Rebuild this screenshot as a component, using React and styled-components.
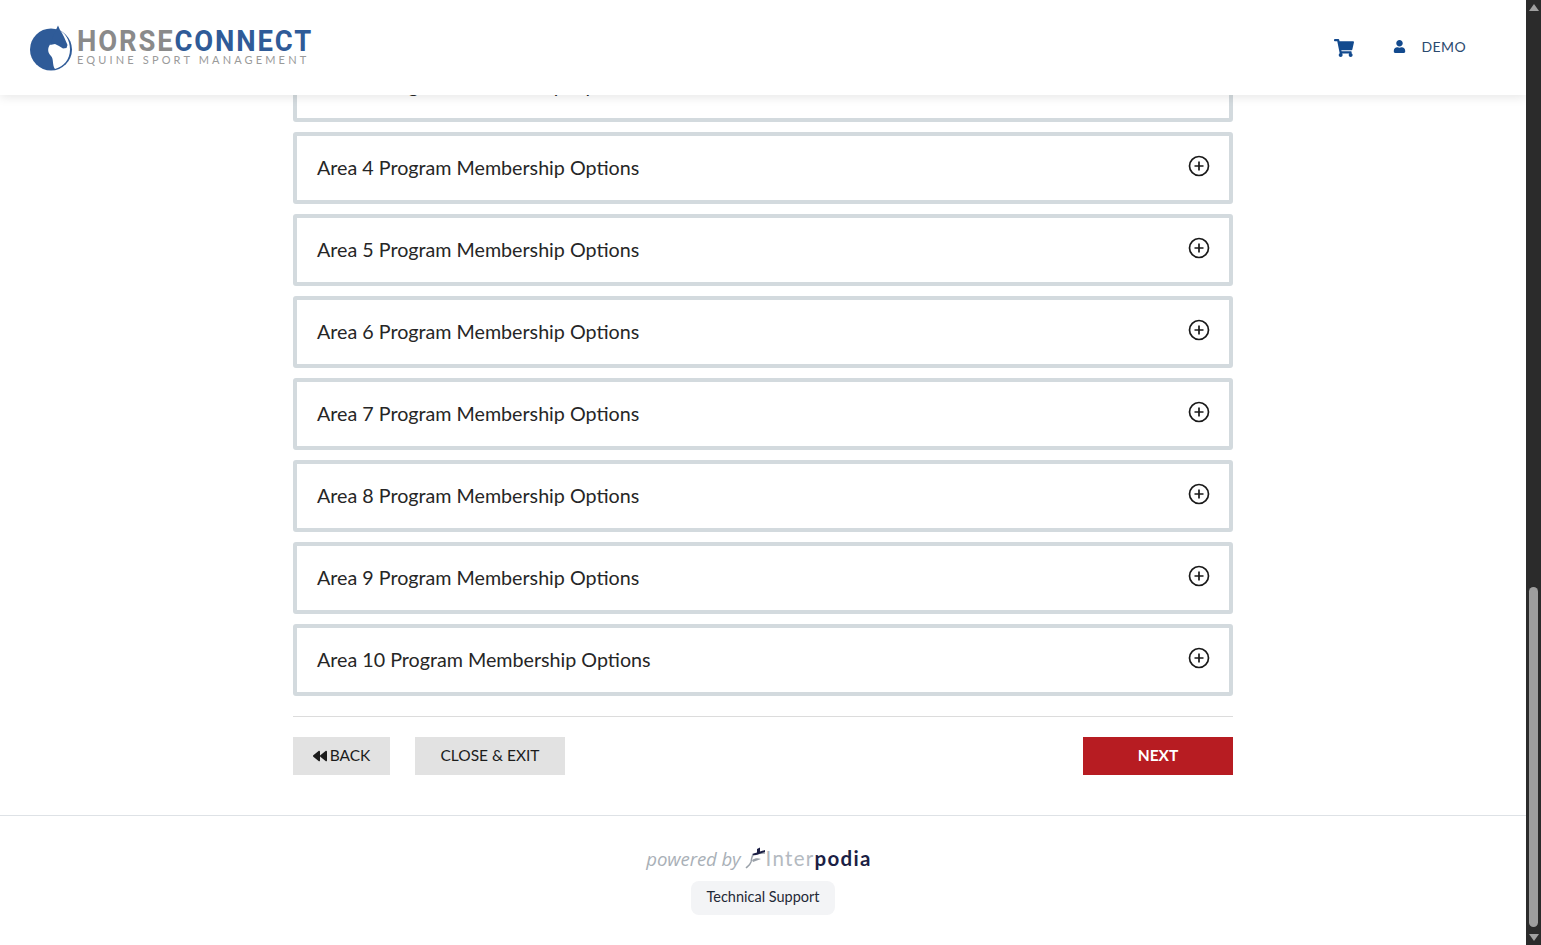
import React from "react";
import styled, { createGlobalStyle } from "styled-components";
import { FaShoppingCart, FaUser, FaBackward } from "react-icons/fa";

const GlobalStyle = createGlobalStyle`
  html, body {
    margin: 0;
    height: 100%;
    overflow: hidden;
    background: #fff;
    font-family: "Lato", "Open Sans", sans-serif;
    color: #212529;
  }
  * {
    box-sizing: border-box;
  }
`;

const Window = styled.div`
  display: flex;
  height: 945px;
  overflow: hidden;
`;

const Page = styled.div`
  position: relative;
  flex: 1;
  min-width: 0;
  overflow: hidden;
`;

const Header = styled.header`
  position: absolute;
  top: 0;
  left: 0;
  right: 0;
  z-index: 2;
  height: 95px;
  background: #fff;
  box-shadow: 0 2px 10px rgb(0 0 0 / 10%);
  display: flex;
  align-items: center;
  justify-content: space-between;
  padding: 0 60px 0 30px;
`;

const Logo = styled.div`
  display: flex;
  align-items: center;
  gap: 3px;
`;

const LogoText = styled.div`
  display: flex;
  flex-direction: column;
  margin-top: -3px;
`;

const LogoName = styled.div`
  font-family: "Roboto", sans-serif;
  font-weight: 700;
  font-size: 29.5px;
  line-height: 27px;
  letter-spacing: 2px;
  color: #8a8a8a;
  white-space: nowrap;
  transform: scaleX(0.93);
  transform-origin: left center;
  span {
    color: #2f5b98;
  }
`;

const LogoTag = styled.div`
  font-family: "Lato", sans-serif;
  font-size: 11px;
  line-height: 10px;
  letter-spacing: 3.15px;
  color: #9a9a9a;
  white-space: nowrap;
`;

const HeaderNav = styled.nav`
  display: flex;
  align-items: center;
  color: #134a8e;
`;

const CartLink = styled.a`
  display: flex;
  font-size: 20px;
  margin-right: 39.5px;
`;

const UserLink = styled.a`
  display: flex;
  align-items: center;
  gap: 15px;
  margin-top: -2px;
  font-size: 14px;
  letter-spacing: 0.4px;
  color: #2b4a6f;
  svg {
    color: #134a8e;
    font-size: 13px;
  }
`;

const Content = styled.main`
  width: 940px;
  margin: 0 auto;
  padding-top: 50px;
`;

const Accordion = styled.div`
  display: flex;
  flex-direction: column;
  gap: 10px;
`;

const Card = styled.div`
  height: 72px;
  border: 4px solid #d3dade;
  border-radius: 3px;
  background: #fff;
  display: flex;
  align-items: center;
  justify-content: space-between;
  padding: 0 19px 0 20px;
  font-size: 19.7px;
  color: #262626;
  span {
    margin-top: -2px;
  }
`;

const PlusIcon = styled.svg`
  width: 22px;
  height: 22px;
  margin-top: -4px;
  fill: none;
  stroke: #1a1a1a;
  stroke-width: 1.7;
`;

const Actions = styled.div`
  margin-top: 20px;
  border-top: 1px solid #dcdcdc;
  padding-top: 20px;
  display: flex;
  gap: 25px;
`;

const Button = styled.button`
  height: 38px;
  width: ${(props) => props.$width}px;
  border: 0;
  border-radius: 0;
  font-family: inherit;
  font-size: 15.5px;
  display: flex;
  align-items: center;
  justify-content: center;
  gap: 3px;
  background: ${(props) => (props.$primary ? "#b71c22" : "#e2e2e2")};
  color: ${(props) => (props.$primary ? "#fff" : "#1c1c1c")};
  font-weight: ${(props) => (props.$primary ? 700 : 400)};
  margin-left: ${(props) => (props.$primary ? "auto" : "0")};
  padding: 0 0 2px;
  svg {
    font-size: 14px;
    margin-top: 2px;
  }
`;

const Footer = styled.footer`
  margin-top: 40px;
  border-top: 1px solid #dee2e6;
  padding-top: 27px;
  display: flex;
  flex-direction: column;
  align-items: center;
`;

const Powered = styled.div`
  display: flex;
  align-items: center;
  height: 30px;
  margin-left: -8px;
`;

const PoweredBy = styled.span`
  font-family: "Open Sans", sans-serif;
  font-style: italic;
  font-size: 18.6px;
  color: #a9b0b7;
  letter-spacing: -0.1px;
  margin-right: 4px;
`;

const Inter = styled.span`
  font-family: "Lato", sans-serif;
  font-size: 20.5px;
  letter-spacing: 1.3px;
  color: #b4bac1;
`;

const Podia = styled.span`
  font-family: "Lato", sans-serif;
  font-size: 20.5px;
  font-weight: 700;
  letter-spacing: 1.3px;
  color: #1c1f45;
`;

const SupportLink = styled.a`
  margin-top: 8px;
  height: 34px;
  width: 144px;
  border-radius: 8px;
  background: #f3f4f6;
  font-size: 14.5px;
  color: #1f2937;
  display: flex;
  align-items: center;
  justify-content: center;
  padding-bottom: 3px;
`;

const Scrollbar = styled.div`
  width: 15px;
  flex: none;
  background: #2b2b2b;
  display: flex;
  flex-direction: column;
  align-items: center;
  justify-content: space-between;
  padding: 4px 0;
`;

const ScrollArrow = styled.div`
  width: 0;
  height: 0;
  border-left: 5px solid transparent;
  border-right: 5px solid transparent;
  border-${(props) => (props.$down ? "top" : "bottom")}: 7px solid #a0a0a0;
`;

const ScrollTrack = styled.div`
  flex: 1;
  width: 100%;
  display: flex;
  flex-direction: column;
  justify-content: flex-end;
  align-items: center;
  padding-bottom: 7px;
`;

const ScrollThumb = styled.div`
  width: 9px;
  height: 340px;
  border-radius: 5px;
  background: #9e9e9e;
`;

function HorseMark() {
  return (
    <svg width="44" height="48" viewBox="0 0 44 48" aria-hidden="true">
      <circle cx="21" cy="25.5" r="21" fill="#2f5b98" />
      <path
        d="M28 6 C35 8 40 16 40 25.5 C40 35 34 42.5 25 45 C22 41 24 35 21 32 C18 29 17 25 20 20.5 L27 14Z"
        fill="#fff"
      />
      <path
        d="M28 1.5 L30 6 C33 10 35 15 37.5 21 L36.5 24 L33 24.5 L29 22 L25 20 L20 21 L24 10Z"
        fill="#2f5b98"
      />
    </svg>
  );
}

function InterpodiaMark() {
  return (
    <svg width="21" height="22" viewBox="0 0 21 22" aria-hidden="true">
      <path d="M1 21 C3 19 5 18 6 15 C7 11 6 9 9 7.5 C12 6 16 6 20 6" fill="none" stroke="#9aa1a9" strokeWidth="1.4" />
      <path d="M7 7 L12 5.5 L12 2 L15 0.5 L15 4.5 L20 3 L20 5 L14 7 C12 8 9 9 7 7Z" fill="#1c1f45" />
      <path d="M7 13 C10 11 13 11 16 12 L8 15Z" fill="#9aa1a9" />
    </svg>
  );
}

function PlusCircle() {
  return (
    <PlusIcon viewBox="0 0 22 22">
      <circle cx="11" cy="11" r="9.5" />
      <path d="M11 6.5 V15.5 M6.5 11 H15.5" />
    </PlusIcon>
  );
}

const areas = [4, 5, 6, 7, 8, 9, 10];

export default function App() {
  return (
    <>
      <GlobalStyle />
      <Window>
        <Page>
          <Header>
            <Logo>
              <HorseMark />
              <LogoText>
                <LogoName>
                  HORSE<span>CONNECT</span>
                </LogoName>
                <LogoTag>EQUINE SPORT MANAGEMENT</LogoTag>
              </LogoText>
            </Logo>
            <HeaderNav>
              <CartLink>
                <FaShoppingCart />
              </CartLink>
              <UserLink>
                <FaUser />
                DEMO
              </UserLink>
            </HeaderNav>
          </Header>
          <Content>
            <Accordion>
              <Card>
                <span>Area 3 Program Membership Options</span>
                <PlusCircle />
              </Card>
              {areas.map((area) => (
                <Card key={area}>
                  <span>Area {area} Program Membership Options</span>
                  <PlusCircle />
                </Card>
              ))}
            </Accordion>
            <Actions>
              <Button $width={97}>
                <FaBackward />
                BACK
              </Button>
              <Button $width={150}>CLOSE &amp; EXIT</Button>
              <Button $width={150} $primary>
                NEXT
              </Button>
            </Actions>
          </Content>
          <Footer>
            <Powered>
              <PoweredBy>powered by</PoweredBy>
              <InterpodiaMark />
              <Inter>Inter</Inter>
              <Podia>podia</Podia>
            </Powered>
            <SupportLink>Technical Support</SupportLink>
          </Footer>
        </Page>
        <Scrollbar>
          <ScrollArrow />
          <ScrollTrack>
            <ScrollThumb />
          </ScrollTrack>
          <ScrollArrow $down />
        </Scrollbar>
      </Window>
    </>
  );
}
